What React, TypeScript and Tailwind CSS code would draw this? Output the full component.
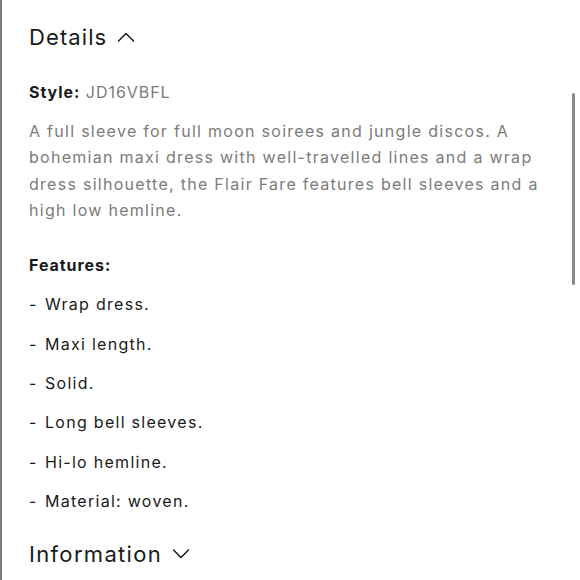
const FEATURES = [
  'Wrap dress.',
  'Maxi length.',
  'Solid.',
  'Long bell sleeves.',
  'Hi-lo hemline.',
  'Material: woven.'
]

// thin chevron used in the accordion headers
function Chevron (props: { up?: boolean }) {
  return (
    <svg width="18" height="10" viewBox="0 0 18 10" fill="none" stroke="#1a1a1a" strokeWidth="1.5" strokeLinecap="round" strokeLinejoin="round">
      {props.up ? <polyline points="1.5,9 9,1.5 16.5,9" /> : <polyline points="1.5,1 9,8.5 16.5,1" />}
    </svg>
  )
}

export default function App () {
  return (
    <div
      className="relative w-[580px] h-[580px] overflow-hidden bg-white border-l-2 border-[#7a7a7a] pl-[27px] pr-8 text-[#1a1a1a]"
      style={{ fontFamily: 'Inter, "Noto Sans", sans-serif' }}
    >
      {/* scrollbar thumb */}
      <div className="absolute left-[570px] top-[93px] w-[3px] h-[192px] rounded-full bg-[#8a8a8a]" />

      <div className="flex items-center gap-[10px] pt-[22px] h-[52px]">
        <span className="text-[22px] leading-[30px] tracking-[0.05em]">Details</span>
        <Chevron up />
      </div>

      <div className="mt-[29px] text-[16px] leading-[22px] tracking-[0.06em]">
        <span className="font-bold">Style:</span>{' '}
        <span className="text-[#7b7b7b]">JD16VBFL</span>
      </div>

      <p className="mt-[15px] text-[16px] leading-[26.4px] tracking-[0.08em] text-[#7b7b7b]">
        A full sleeve for full moon soirees and jungle discos. A bohemian maxi dress with well-travelled lines and a wrap dress silhouette, the Flair Fare features bell sleeves and a high low hemline.
      </p>

      <div className="mt-[30px] text-[16px] leading-[22px] tracking-[0.06em] font-bold">
        Features:
      </div>

      <ul className="mt-[9px] flex flex-col">
        {FEATURES.map(f => (
          <li key={f} className="flex h-[39.4px] items-center text-[16px] tracking-[0.08em]">
            <span className="w-[16px]">-</span>
            <span>{f}</span>
          </li>
        ))}
      </ul>

      <div className="mt-[18px] flex items-center gap-[10px]">
        <span className="text-[22px] leading-[30px] tracking-[0.06em]">Information</span>
        <Chevron />
      </div>
    </div>
  )
}
